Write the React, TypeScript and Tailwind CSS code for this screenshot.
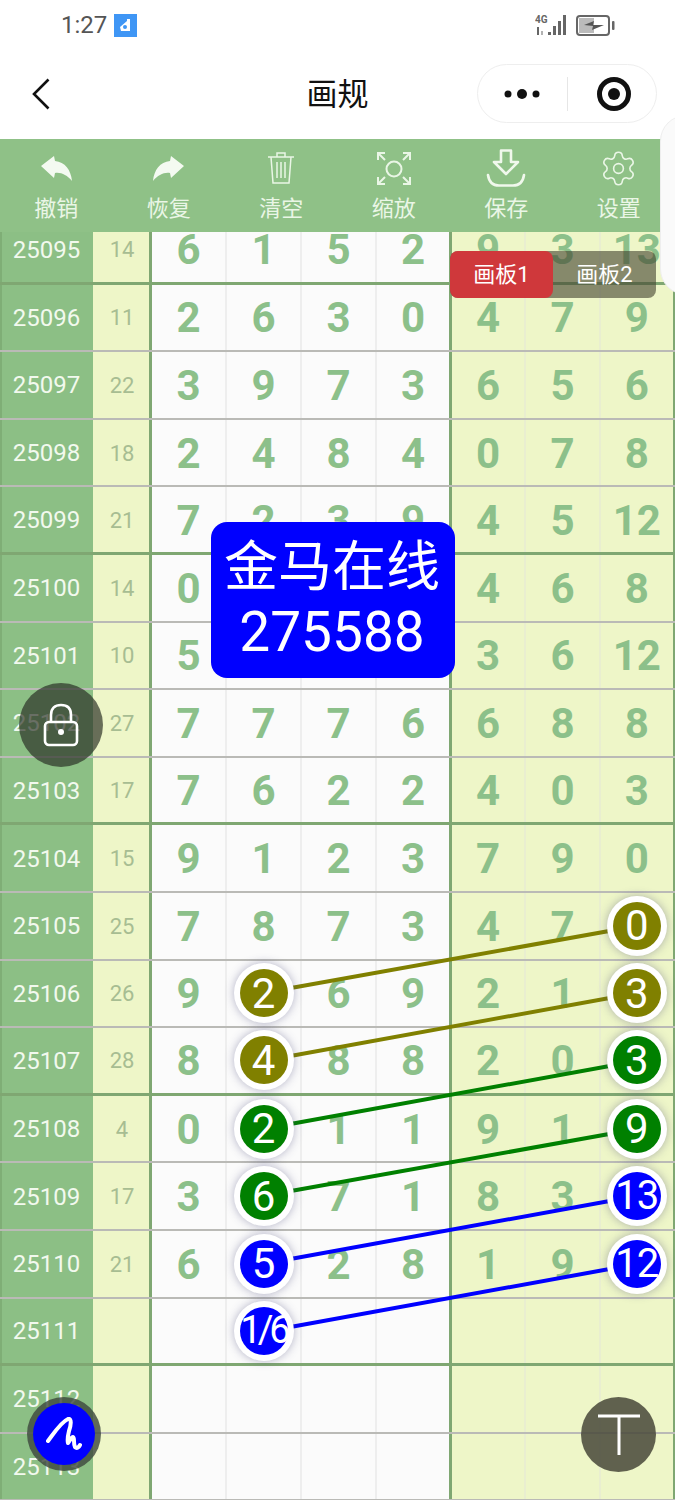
import React from 'react';
import { Settings } from 'lucide-react';

type Row = { id: number; sum?: string; left: string[]; right: string[] };

const rows: Row[] = [
  { id: 25095, sum: '14', left: ['6', '1', '5', '2'], right: ['9', '3', '13'] },
  { id: 25096, sum: '11', left: ['2', '6', '3', '0'], right: ['4', '7', '9'] },
  { id: 25097, sum: '22', left: ['3', '9', '7', '3'], right: ['6', '5', '6'] },
  { id: 25098, sum: '18', left: ['2', '4', '8', '4'], right: ['0', '7', '8'] },
  { id: 25099, sum: '21', left: ['7', '2', '3', '9'], right: ['4', '5', '12'] },
  { id: 25100, sum: '14', left: ['0', '', '', ''], right: ['4', '6', '8'] },
  { id: 25101, sum: '10', left: ['5', '', '', ''], right: ['3', '6', '12'] },
  { id: 25102, sum: '27', left: ['7', '7', '7', '6'], right: ['6', '8', '8'] },
  { id: 25103, sum: '17', left: ['7', '6', '2', '2'], right: ['4', '0', '3'] },
  { id: 25104, sum: '15', left: ['9', '1', '2', '3'], right: ['7', '9', '0'] },
  { id: 25105, sum: '25', left: ['7', '8', '7', '3'], right: ['4', '7', ''] },
  { id: 25106, sum: '26', left: ['9', '', '6', '9'], right: ['2', '1', ''] },
  { id: 25107, sum: '28', left: ['8', '', '8', '8'], right: ['2', '0', ''] },
  { id: 25108, sum: '4', left: ['0', '', '1', '1'], right: ['9', '1', ''] },
  { id: 25109, sum: '17', left: ['3', '', '7', '1'], right: ['8', '3', ''] },
  { id: 25110, sum: '21', left: ['6', '', '2', '8'], right: ['1', '9', ''] },
  { id: 25111, left: ['', '', '', ''], right: ['', '', ''] },
  { id: 25112, left: ['', '', '', ''], right: ['', '', ''] },
  { id: 25113, left: ['', '', '', ''], right: ['', '', ''] },
];

// picked balls, keyed by period
const picksLeft: Record<number, { n: string; color: string }> = {
  25106: { n: '2', color: 'bg-[#808000]' },
  25107: { n: '4', color: 'bg-[#808000]' },
  25108: { n: '2', color: 'bg-[#008000]' },
  25109: { n: '6', color: 'bg-[#008000]' },
  25110: { n: '5', color: 'bg-[#0000ff]' },
  25111: { n: '1/6', color: 'bg-[#0000ff]' },
};
const picksRight: Record<number, { n: string; color: string }> = {
  25105: { n: '0', color: 'bg-[#808000]' },
  25106: { n: '3', color: 'bg-[#808000]' },
  25107: { n: '3', color: 'bg-[#008000]' },
  25108: { n: '9', color: 'bg-[#008000]' },
  25109: { n: '13', color: 'bg-[#0000ff]' },
  25110: { n: '12', color: 'bg-[#0000ff]' },
};

function Ball({ n, color }: { n: string; color: string }) {
  return (
    <div className="absolute left-1/2 top-1/2 z-20 flex h-[60px] w-[60px] -translate-x-1/2 -translate-y-1/2 items-center justify-center rounded-full bg-white shadow-[0_0_10px_rgba(70,70,120,0.4)]">
      <div
        className={`flex h-[48px] w-[48px] items-center justify-center whitespace-nowrap rounded-full text-white ${color} ${
          n === '1/6' ? 'text-[38px] tracking-[-4px]' : n.length > 1 ? 'text-[40px] tracking-[-1px]' : 'text-[42px]'
        }`}
      >
        {n}
      </div>
    </div>
  );
}

function Digit({ value }: { value: string }) {
  return <span className="pt-[2px] text-[42px] font-bold leading-none text-[#8cc08a]">{value}</span>;
}

function TableRow({ row, index }: { row: Row; index: number }) {
  const thick = index % 4 === 0;
  const line = thick ? 'border-b-[3px] border-[#7fa772]' : 'border-b-2 border-[rgba(90,90,80,0.42)]';
  return (
    <div className={`flex h-[67.6px] w-[675px] ${line}`}>
      <div className="flex w-[93px] items-center justify-center border-l-2 border-[#7fae76] bg-[#8cbf85] pr-[2px] pt-[1px] text-[24px] text-[#f2f9ee]">
        {row.id}
      </div>
      <div className="flex w-[59px] items-center justify-center border-r-[3px] border-[#7fa772] bg-[#eef6c8] pl-[2px] pt-[1px] text-[22px] text-[#a7bd92]">
        {row.sum}
      </div>
      <div className="flex w-[297px] bg-[#fbfbfb]">
        {row.left.map((d, i) => (
          <div key={i} className={`relative flex items-center justify-center ${i < 3 ? 'w-[75px] border-r-2 border-[#eeeeee]' : 'flex-1'}`}>
            <Digit value={d} />
            {i === 1 && picksLeft[row.id] && <Ball {...picksLeft[row.id]} />}
          </div>
        ))}
      </div>
      <div className="flex w-[226px] border-x-[3px] border-r-2 border-[#7fa772] bg-[#eef6c8]">
        {row.right.map((d, i) => (
          <div key={i} className={`relative flex flex-1 items-center justify-center ${i > 0 ? 'border-l-2 border-[#e9eed0]' : ''}`}>
            <Digit value={d} />
            {i === 2 && picksRight[row.id] && <Ball {...picksRight[row.id]} />}
          </div>
        ))}
      </div>
    </div>
  );
}

function ToolItem({ icon, label }: { icon: React.ReactNode; label: string }) {
  return (
    <div className="flex flex-col items-center">
      <div className="flex h-[50px] items-center justify-center">{icon}</div>
      <div className="mt-[1px] text-[22px] leading-[30px] text-[#eaf6e6]">{label}</div>
    </div>
  );
}

function UndoIcon({ flip }: { flip?: boolean }) {
  return (
    <svg width="31" height="25" viewBox="0 0 31 25" className={flip ? '-scale-x-100' : ''} fill="#f4faf1">
      <path d="M0 10 L13 0 L14 5 C24 6 30 14 31 25 C26 19 20 16 14 17 L13 22 Z" />
    </svg>
  );
}

function TrashIcon() {
  return (
    <svg width="28" height="34" viewBox="0 0 28 34" fill="none" stroke="#eaf6e6" strokeWidth="1.5">
      <path d="M1 6 H27 M10 6 V2 H18 V6 M4 6 L6 32 H22 L24 6 M10 11 V27 M14 11 V27 M18 11 V27" />
    </svg>
  );
}

function ScanIcon() {
  return (
    <svg width="34" height="33" viewBox="0 0 34 33" fill="none" stroke="#eaf6e6" strokeWidth="2">
      <circle cx="17" cy="17" r="7.5" />
      <path d="M1 8 V1 H8 M1 1 L8 8 M26 1 H33 V8 M33 1 L26 8 M1 25 V32 H8 M1 32 L8 25 M26 32 H33 V25 M33 32 L26 25" />
    </svg>
  );
}

function SaveIcon() {
  return (
    <svg width="40" height="38" viewBox="0 0 40 38" fill="none" stroke="#f0f8ec" strokeWidth="2.6">
      <path d="M15 1.5 H25 V13 H32 L20 25 L8 13 H15 Z" strokeLinejoin="round" />
      <path d="M2 26 C3 33 7 36.5 13 36.5 H27 C33 36.5 37 33 38 26" strokeLinecap="round" />
    </svg>
  );
}

export default function App() {
  return (
    <div className="relative flex h-[1500px] w-[675px] flex-col overflow-hidden bg-white font-['Roboto','Noto_Sans_CJK_SC',sans-serif]">
      {/* Status bar */}
      <div className="flex h-[48px] items-center justify-between pl-[61px] pr-[60px] pt-[2px]">
        <div className="flex items-center gap-[7px]">
          <span className="text-[24px] leading-none text-[#555555]">1:27</span>
          <svg width="23" height="23" viewBox="0 0 23 23">
            <rect width="23" height="23" fill="#3f96f5" />
            <path d="M6 13 L13 7 L13 5 L16 5 L16 17 L7 17 Z" fill="#ffffff" />
            <circle cx="11" cy="13" r="2" fill="#3f96f5" />
          </svg>
        </div>
        <div className="flex items-center gap-[7px]">
          <svg width="34" height="22" viewBox="0 0 34 22" fill="#666666">
            <text x="0" y="9" fontSize="10" fontWeight="700">4G</text>
            <path d="M2 13 H4 V21 H2 Z" />
            <path d="M6 17 H8 V21 H6 Z" opacity="0.5" />
            <rect x="13" y="18" width="3" height="3" />
            <rect x="18" y="12" width="3" height="9" />
            <rect x="23" y="7" width="3" height="14" />
            <rect x="28" y="1" width="3" height="20" />
          </svg>
          <svg width="39" height="21" viewBox="0 0 39 21" fill="none">
            <rect x="1" y="1" width="32" height="19" rx="3" stroke="#666666" strokeWidth="2" />
            <rect x="3" y="3" width="15" height="15" fill="#bbbbbb" />
            <path d="M8 10 L18 6 L17 10 L28 10 L16 15 L17 11 Z" fill="#555555" />
            <rect x="36" y="6" width="2.5" height="9" rx="1" fill="#666666" />
          </svg>
        </div>
      </div>

      {/* Nav */}
      <div className="grid h-[91px] grid-cols-[1fr_auto_1fr] items-center px-[18px]">
        <svg width="18" height="32" viewBox="0 0 18 32" fill="none" stroke="#111111" strokeWidth="2.6" className="ml-[14px]">
          <path d="M16.5 1.5 L2 16 L16.5 30.5" />
        </svg>
        <div className="pt-[4px] text-[31px] text-[#111111]">画规</div>
        <div className="flex h-[59px] w-[180px] items-center justify-self-end rounded-full border border-[#eeeeee] pl-[25px]">
          <svg width="40" height="14" viewBox="0 0 40 14" fill="#111111">
            <circle cx="5" cy="7" r="3.5" />
            <circle cx="19" cy="7" r="5" />
            <circle cx="33" cy="7" r="3.5" />
          </svg>
          <div className="ml-[24px] h-[34px] w-px bg-[#e6e6e6]" />
          <svg width="34" height="34" viewBox="0 0 34 34" className="ml-[29px]">
            <circle cx="17" cy="17" r="14.5" fill="none" stroke="#111111" strokeWidth="5" />
            <circle cx="17" cy="17" r="6" fill="#111111" />
          </svg>
        </div>
      </div>

      {/* Toolbar */}
      <div className="grid h-[93px] grid-cols-6 bg-[#8fc187] pt-[4px]">
        <ToolItem icon={<UndoIcon />} label="撤销" />
        <ToolItem icon={<UndoIcon flip />} label="恢复" />
        <ToolItem icon={<TrashIcon />} label="清空" />
        <ToolItem icon={<ScanIcon />} label="缩放" />
        <ToolItem icon={<SaveIcon />} label="保存" />
        <ToolItem icon={<Settings size={39} strokeWidth={1} color="#eaf6e6" />} label="设置" />
      </div>

      {/* Table */}
      <div className="min-h-0 flex-1 overflow-hidden">
        <div className="-mt-[15px]">
          {rows.map((row, i) => (
            <TableRow key={row.id} row={row} index={i} />
          ))}
        </div>
      </div>

      {/* Connecting lines */}
      <svg className="pointer-events-none absolute left-0 top-0 z-10 h-[1500px] w-[675px]" viewBox="0 0 675 1500" fill="none" strokeWidth="4">
        <g stroke="#808000">
          <path d="M263 993 L637 926" />
          <path d="M263 1061 L637 993" />
        </g>
        <g stroke="#008000">
          <path d="M263 1129 L637 1061" />
          <path d="M263 1196 L637 1129" />
        </g>
        <g stroke="#0000ff">
          <path d="M263 1264 L637 1196" />
          <path d="M263 1332 L637 1264" />
        </g>
      </svg>

      {/* Side handle */}
      <div className="absolute left-[660px] top-[115px] z-30 h-[180px] w-[30px] rounded-l-[26px] border border-[#eeeeee] bg-[#fafafa]" />

      {/* Board tabs */}
      <div className="absolute left-[450px] top-[251px] z-30 flex h-[47px] w-[206px] rounded-lg bg-[rgba(70,70,50,0.62)] text-[22px] text-white">
        <div className="flex w-[103px] items-center justify-center rounded-lg bg-[#cf383b]">画板1</div>
        <div className="flex flex-1 items-center justify-center">画板2</div>
      </div>

      {/* Watermark */}
      <div className="absolute left-[211px] top-[522px] z-30 flex h-[156px] w-[244px] flex-col items-center justify-center rounded-2xl bg-[#0000ff] pr-[2px] text-[54px] leading-[64px] text-white">
        <div>金马在线</div>
        <div className="text-[55px]">275588</div>
      </div>

      {/* Lock */}
      <div className="absolute left-[19px] top-[683px] z-30 flex h-[84px] w-[84px] items-center justify-center rounded-full bg-[rgba(40,45,35,0.68)]">
        <svg width="36" height="44" viewBox="0 0 36 44" fill="none" stroke="#ffffff" strokeWidth="2.6">
          <path d="M8 19 V12 C8 5 12 2 18 2 C24 2 28 5 28 12 V19" />
          <rect x="2" y="19" width="32" height="23" rx="4" />
          <circle cx="18" cy="29" r="3" fill="#ffffff" stroke="none" />
        </svg>
      </div>

      {/* Pen */}
      <div className="absolute left-[27px] top-[1397px] z-30 flex h-[74px] w-[74px] items-center justify-center rounded-full bg-[rgba(60,70,60,0.8)]">
        <div className="flex h-[62px] w-[62px] items-center justify-center rounded-full bg-[#0000ff]">
          <svg width="36" height="34" viewBox="0 0 36 34" fill="none" stroke="#ffffff" strokeWidth="4" strokeLinecap="round" strokeLinejoin="round">
            <path d="M2 24 C8 16 15 5 22 2 C26 1 25 8 23 14 C22 18 21 22 22 26 C24 24 25 20 27 20 C29 21 27 26 29 30 C31 32 33 30 34 28" />
          </svg>
        </div>
      </div>

      {/* Text tool */}
      <div className="absolute left-[581px] top-[1397px] z-30 flex h-[75px] w-[75px] items-center justify-center rounded-full bg-[rgba(75,75,60,0.87)]">
        <svg width="44" height="42" viewBox="0 0 44 42" fill="none" stroke="#ffffff" strokeWidth="3">
          <path d="M1 2 H43 M22 2 V41" />
        </svg>
      </div>
    </div>
  );
}
